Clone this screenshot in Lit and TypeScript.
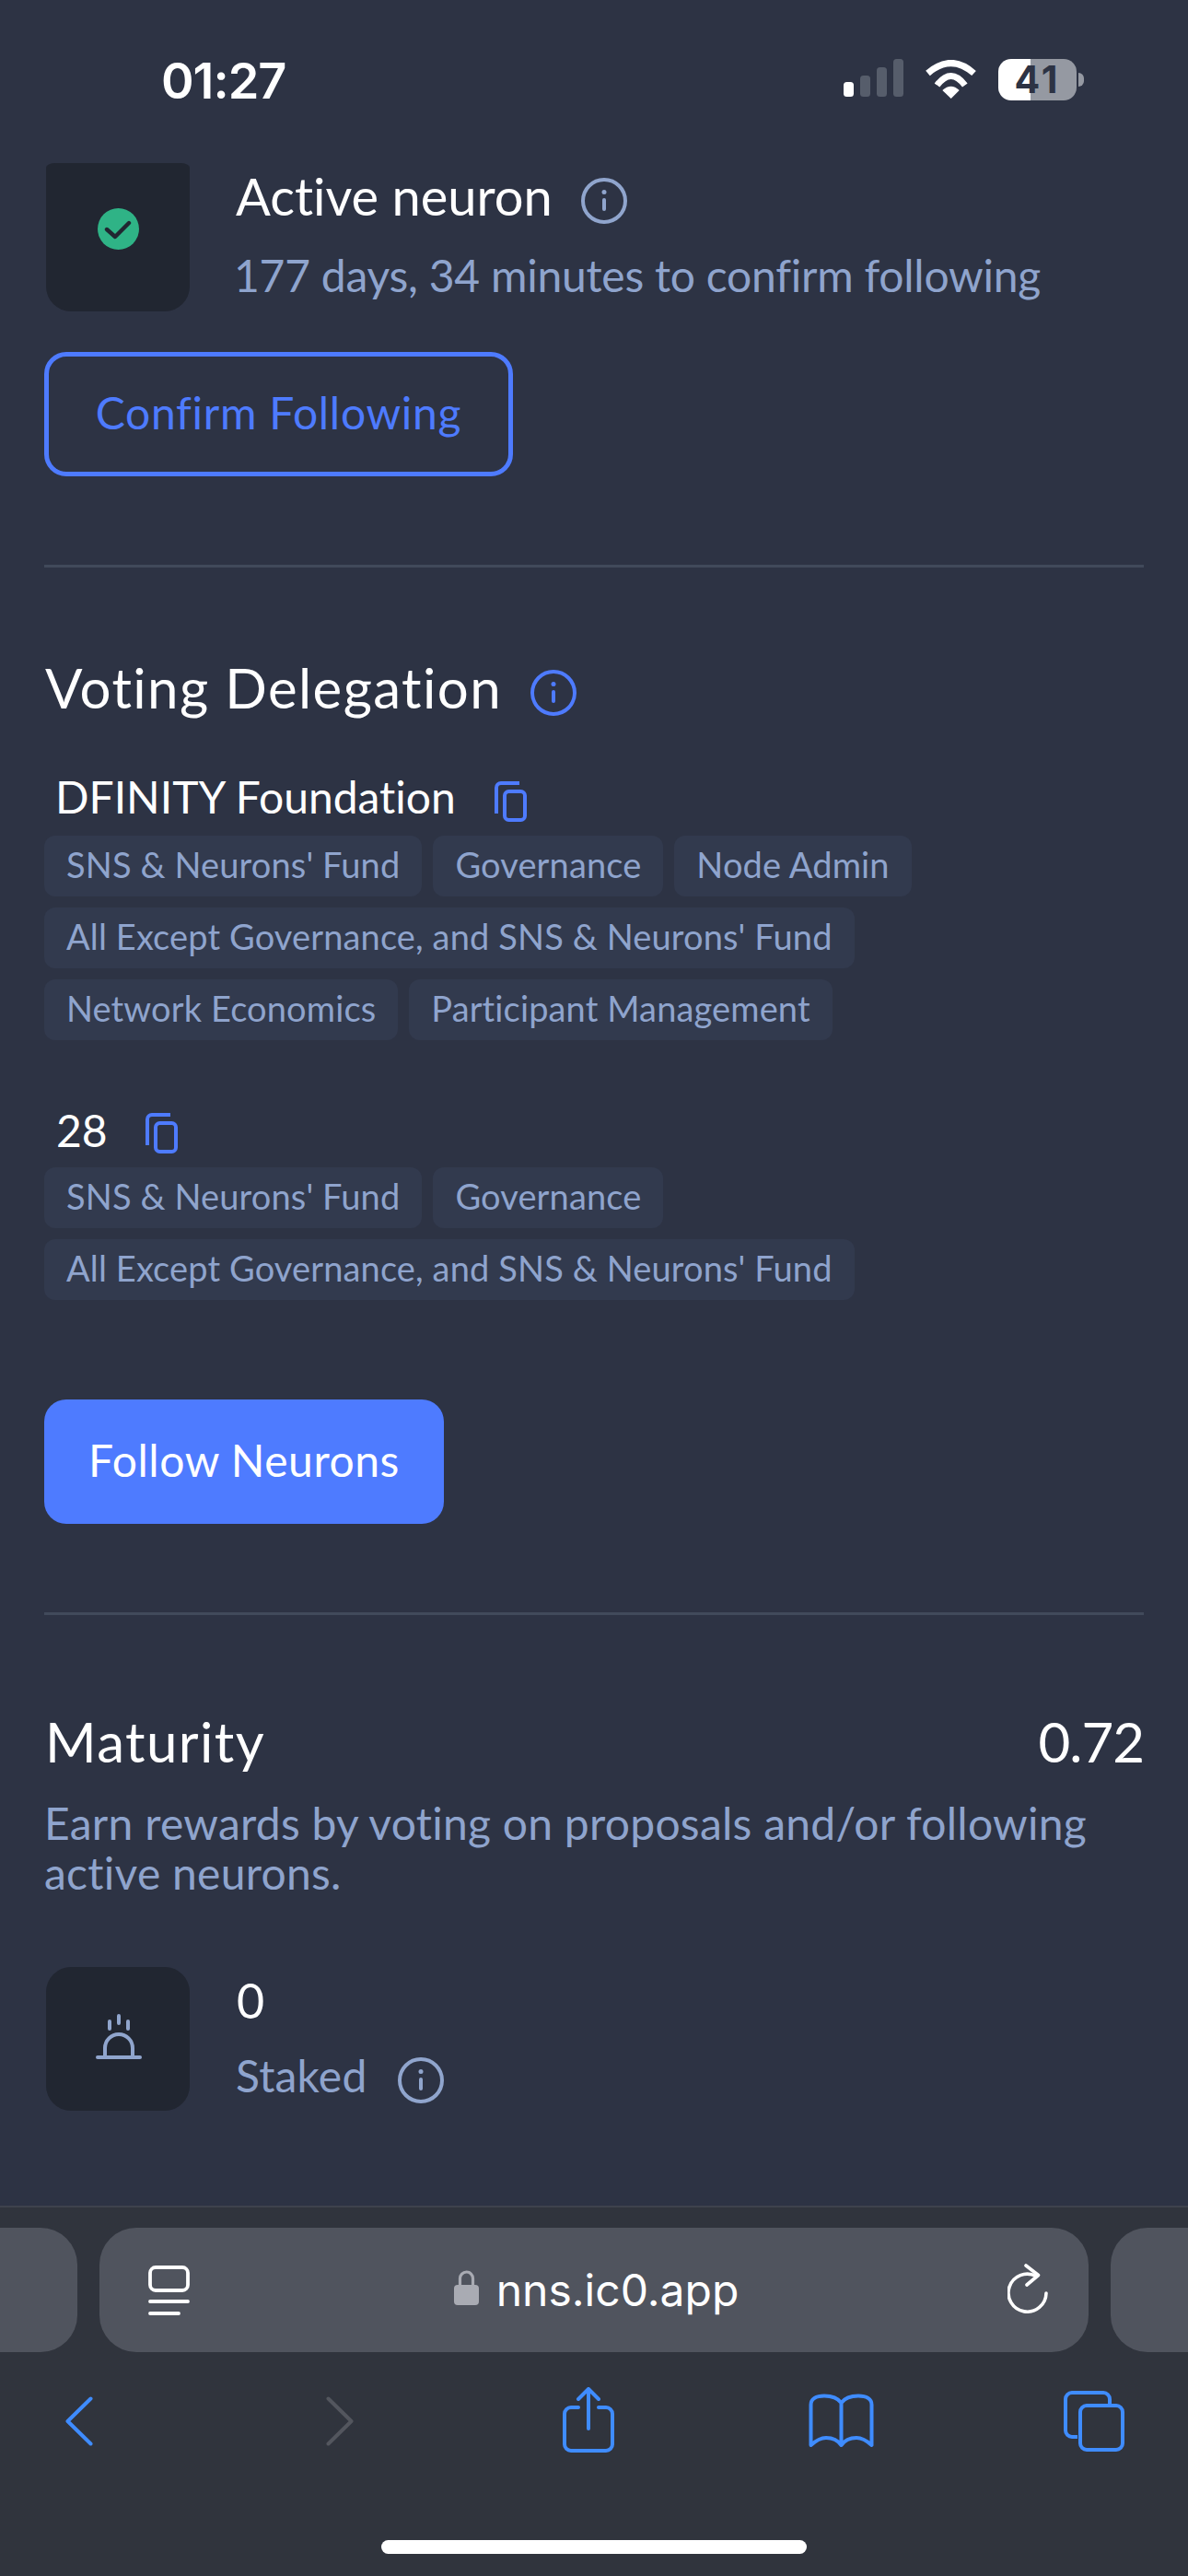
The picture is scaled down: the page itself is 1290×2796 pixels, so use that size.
import { LitElement, html, css } from "lit";
import { customElement } from "lit/decorators.js";

const info = (cls: string) => html`<svg class="info ${cls}" viewBox="0 0 50 50" fill="none" stroke="currentColor" stroke-width="4" stroke-linecap="round"><circle cx="25" cy="25" r="23"/><path d="M25 24v10"/><circle cx="25" cy="15.5" r="2.5" fill="currentColor" stroke="none"/></svg>`;
const copy = html`<svg class="copy" viewBox="0 0 35 44" fill="none" stroke="#4e7bff" stroke-width="4"><path d="M2 35V7a5 5 0 0 1 5-5H27"/><rect x="11" y="11" width="22" height="31" rx="4.5"/></svg>`;

@customElement("app-root")
export class AppRoot extends LitElement {
  static styles = css`
    :host { display: block; width: 1290px; height: 2796px; overflow: hidden; background: #2d3344; font-family: Lato, "Open Sans", sans-serif; font-variant-ligatures: none; color: #fff; }
    .page { width: 1290px; height: 2796px; display: flex; flex-direction: column; }
    .status { flex: none; height: 177px; box-sizing: border-box; padding: 64px 113px 0 175px; display: flex; align-items: flex-start; }
    .time { font: 600 54px/48px Inter, sans-serif; letter-spacing: -1px; }
    .sys { margin-left: auto; display: flex; align-items: flex-start; gap: 23px; }
    .signal { width: 65px; height: 45px; }
    .wifi { width: 57px; height: 43px; margin-top: 1px; }
    .battery-wrap { display: flex; align-items: center; gap: 2px; }
    .battery { width: 85px; height: 45px; border-radius: 14px; background: linear-gradient(90deg, #fff 0 35px, #9599a2 35px); color: #2d3344; font: 700 41px/45px Inter, sans-serif; text-align: center; letter-spacing: 3px; }
    .nub { width: 6px; height: 15px; background: #9599a2; border-radius: 0 8px 8px 0; }

    main { flex: 1; min-height: 0; padding: 0 48px; display: flex; flex-direction: column; align-items: stretch; }
    .row { display: flex; align-items: flex-start; }
    .status-row { margin-left: 2px; gap: 51px; }
    .tile { flex: none; width: 156px; background: #212631; display: flex; align-items: center; justify-content: center; box-sizing: border-box; }
    .tile.clipped { height: 161px; border-radius: 10px 10px 27px 27px / 5px 5px 27px 27px; padding-bottom: 19px; }
    .tile.full { height: 156px; border-radius: 27px; padding: 0 0 4px 2px; }
    .tile svg { display: block; }
    .check { width: 45px; height: 45px; }
    .bell { width: 50px; height: 50px; }
    .col { padding-top: 7px; }
    .title { height: 60px; display: flex; align-items: flex-start; gap: 31px; font-size: 56px; line-height: 57px; margin-left: -1px; }
    .sub { margin: 29px 0 0 -3px; height: 54px; font-size: 48px; line-height: 51px; letter-spacing: -0.25px; color: #8fa4cd; white-space: nowrap; }
    .info { width: 50px; height: 50px; flex: none; color: #90a5cd; display: block; }
    .info.t { margin-top: 9px; }
    .info.blue { color: #4e7bff; margin-top: 16px; }
    .info.s { margin-top: 7px; }
    .btn { box-sizing: border-box; height: 135px; border-radius: 24px; display: flex; align-items: center; justify-content: center; font-size: 48px; letter-spacing: 0.55px; padding-bottom: 5px; }
    .outline { margin-top: 44px; width: 509px; border: 5px solid #4e7bff; color: #4e7bff; letter-spacing: 0.7px; }
    .solid { margin-top: 108px; width: 434px; background: #4e7bff; color: #fff; }
    .rule { flex: none; height: 3px; background: #414a5b; }
    .rule.a { margin-top: 96px; }
    .rule.b { margin-top: 96px; }
    h2 { margin: 0; font-weight: 400; font-size: 60px; line-height: 68px; height: 70px; letter-spacing: 1.4px; padding-left: 1px; }
    .voting h2 { line-height: 70px; }
    .value { letter-spacing: -1px; padding: 0; }
    .voting { margin-top: 95px; gap: 31px; }
    .name { margin-top: 54px; height: 60px; padding-left: 12px; gap: 42px; font-size: 48px; line-height: 59px; }
    .name.second { margin-top: 68px; padding-left: 13px; gap: 41px; line-height: 60px; }
    .copy { width: 35px; height: 44px; margin-top: 13px; flex: none; display: block; }
    .second .copy { margin-top: 11px; }
    .tags { margin-top: 12px; display: flex; flex-wrap: wrap; gap: 12px; }
    .tags.second { margin-top: 10px; }
    .tag { height: 66px; padding: 0 24px; box-sizing: border-box; background: #323a4e; border-radius: 12px; color: #8fa4cd; font-size: 38px; line-height: 63px; letter-spacing: 0.13px; white-space: nowrap; }
    .maturity { margin-top: 103px; justify-content: space-between; }
    .desc { margin: 26px 0 3px; font-size: 48px; line-height: 54px; letter-spacing: 0.26px; color: #8fa4cd; }
    .staked { margin-top: 72px; margin-left: 2px; gap: 51px; }
    .staked .col { padding-top: 6px; }
    .zero { font-size: 52px; line-height: 60px; }
    .staked-label { margin: 25px 0 0 -1px; display: flex; align-items: flex-start; gap: 34px; height: 54px; font-size: 48px; line-height: 54px; letter-spacing: 0.2px; color: #8fa4cd; }

    .chrome { flex: none; height: 402px; box-sizing: border-box; background: #30343d; border-top: 2px solid #3e424d; }
    .pills { margin-top: 22px; height: 135px; display: flex; gap: 24px; }
    .stub { background: #50545e; flex: none; }
    .stub.l { width: 84px; border-radius: 0 40px 40px 0; }
    .stub.r { width: 84px; border-radius: 40px 0 0 40px; }
    .pill { flex: none; width: 1074px; box-sizing: border-box; background: #50545e; border-radius: 40px; padding: 0 44px 0 53px; display: flex; align-items: center; justify-content: space-between; }
    .pill svg { display: block; flex: none; }
    .pages { width: 45px; height: 56px; margin-top: 3px; }
    .url { display: flex; align-items: center; gap: 19px; margin-right: 5px; font: 400 48px/56px Inter, sans-serif; letter-spacing: 0; }
    .lock { width: 27px; height: 39px; margin-top: -6px; }
    .reload { width: 44px; height: 54px; margin-top: -4px; }
    .nav { height: 204px; display: flex; align-items: flex-start; }
    .nav svg { display: block; flex: none; }
    .back { width: 30px; height: 54px; margin: 48px 0 0 71px; }
    .fwd { width: 30px; height: 54px; margin: 48px 0 0 253px; }
    .share { width: 56px; height: 71px; margin: 38px 0 0 227px; }
    .book { width: 71px; height: 59px; margin: 45px 0 0 211px; }
    .tabs { width: 66px; height: 66px; margin: 42px 0 0 206px; }
    .home { width: 462px; height: 15px; margin-left: 414px; border-radius: 8px; background: #fff; }
  `;

  private tags(items: string[], cls = "") {
    return html`<div class="tags ${cls}">${items.map((t) => html`<span class="tag">${t}</span>`)}</div>`;
  }

  render() {
    return html`<div class="page">
      <header class="status">
        <div class="time">01:27</div>
        <div class="sys">
          <svg class="signal" viewBox="0 0 65 45">
            <rect x="0" y="25" width="11" height="16" rx="3.5" fill="#fff"/>
            <rect x="18" y="18" width="11" height="23" rx="3.5" fill="#565d6b"/>
            <rect x="36" y="9" width="11" height="32" rx="3.5" fill="#565d6b"/>
            <rect x="54" y="0" width="11" height="41" rx="3.5" fill="#565d6b"/>
          </svg>
          <svg class="wifi" viewBox="0 0 57 43" fill="none" stroke="#fff" stroke-width="7">
            <path d="M3.5 14.5Q28.7 -7.5 53.5 14.5"/>
            <path d="M13.5 27.5Q28.7 7.5 43.8 27.5"/>
            <path d="M19.3 33Q28.7 24.5 37.7 33L28.7 42Z" fill="#fff" stroke="none"/>
          </svg>
          <div class="battery-wrap"><div class="battery">41</div><div class="nub"></div></div>
        </div>
      </header>
      <main>
        <div class="row status-row">
          <div class="tile clipped">
            <svg class="check" viewBox="0 0 45 45" fill="none"><circle cx="22.5" cy="22.5" r="22.5" fill="#2fb386"/><path d="M10 23l9 8 15-15" stroke="#212631" stroke-width="4.4" stroke-linecap="round" stroke-linejoin="round"/></svg>
          </div>
          <div class="col">
            <div class="title">Active neuron ${info("t")}</div>
            <div class="sub">177 days, 34 minutes to confirm following</div>
          </div>
        </div>
        <div class="btn outline">Confirm Following</div>
        <div class="rule a"></div>
        <div class="row voting"><h2>Voting Delegation</h2>${info("blue")}</div>
        <div class="row name">DFINITY Foundation ${copy}</div>
        ${this.tags(["SNS & Neurons' Fund", "Governance", "Node Admin", "All Except Governance, and SNS & Neurons' Fund", "Network Economics", "Participant Management"])}
        <div class="row name second">28 ${copy}</div>
        ${this.tags(["SNS & Neurons' Fund", "Governance", "All Except Governance, and SNS & Neurons' Fund"], "second")}
        <div class="btn solid">Follow Neurons</div>
        <div class="rule b"></div>
        <div class="row maturity"><h2>Maturity</h2><h2 class="value">0.72</h2></div>
        <p class="desc">Earn rewards by voting on proposals and/or following active neurons.</p>
        <div class="row staked">
          <div class="tile full">
            <svg class="bell" viewBox="0 0 50 50" fill="none" stroke="#90a5cd" stroke-width="4" stroke-linecap="round"><path d="M2 47H48"/><path d="M10 46V37a15 15 0 0 1 30 0V46"/><path d="M15 8v8M25 2v8M35 8v8"/></svg>
          </div>
          <div class="col">
            <div class="zero">0</div>
            <div class="staked-label">Staked ${info("s")}</div>
          </div>
        </div>
      </main>
      <footer class="chrome">
        <div class="pills">
          <div class="stub l"></div>
          <div class="pill">
            <svg class="pages" viewBox="0 0 45 56" fill="none" stroke="#fff" stroke-width="3.8" stroke-linecap="round"><rect x="2" y="2" width="41" height="25" rx="6"/><path d="M2 39H43M2 52H33"/></svg>
            <div class="url">
              <svg class="lock" viewBox="0 0 27 39" fill="none"><path d="M6.5 18V10a7 7 0 0 1 14 0v8" stroke="#a9abb3" stroke-width="3.2"/><rect x="0" y="17" width="27" height="22" rx="4" fill="#a9abb3"/></svg>
              <span>nns.ic0.app</span>
            </div>
            <svg class="reload" viewBox="0 0 44 54" fill="none" stroke="#fff" stroke-width="3.6" stroke-linecap="round" stroke-linejoin="round"><path d="M31 13.5A20.5 20.5 0 1 0 42 32"/><path d="M20 2L33.5 12.5L21 23"/></svg>
          </div>
          <div class="stub r"></div>
        </div>
        <div class="nav">
          <svg class="back" viewBox="0 0 30 54" fill="none" stroke="#3f8cff" stroke-width="4" stroke-linecap="round" stroke-linejoin="round"><path d="M27.5 2.5L2.5 27L27.5 51.5"/></svg>
          <svg class="fwd" viewBox="0 0 30 54" fill="none" stroke="#53565e" stroke-width="4" stroke-linecap="round" stroke-linejoin="round"><path d="M2.5 2.5L27.5 27L2.5 51.5"/></svg>
          <svg class="share" viewBox="0 0 56 71" fill="none" stroke="#3f8cff" stroke-width="4" stroke-linecap="round" stroke-linejoin="round"><path d="M17 22H9a7 7 0 0 0-7 7V62a7 7 0 0 0 7 7H47a7 7 0 0 0 7-7V29a7 7 0 0 0-7-7H39"/><path d="M28 2V45M17 13L28 2L39 13"/></svg>
          <svg class="book" viewBox="0 0 71 59" fill="none" stroke="#3f8cff" stroke-width="4" stroke-linejoin="round" stroke-linecap="round"><path d="M35.5 10C31 4 23 2.5 17 2.5C8 2.5 2.5 6 2.5 12V56C8 51 13 48 19 48C26 48 32 51 35.5 56C39 51 45 48 52 48C58 48 63 51 68.5 56V12C68.5 6 63 2.5 54 2.5C48 2.5 40 4 35.5 10V56"/></svg>
          <svg class="tabs" viewBox="0 0 66 66" fill="none" stroke="#3f8cff" stroke-width="4" stroke-linejoin="round"><path d="M15 50H9a7 7 0 0 1-7-7V9a7 7 0 0 1 7-7H43a7 7 0 0 1 7 7V15"/><rect x="18" y="16" width="46" height="48" rx="7"/></svg>
        </div>
        <div class="home"></div>
      </footer>
    </div>`;
  }
}
